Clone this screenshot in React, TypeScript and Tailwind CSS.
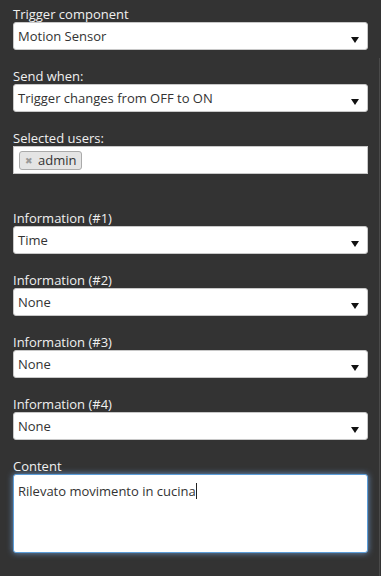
import React from "react";

const Arrow = () => (
  <svg width="8" height="6" viewBox="0 0 8 6" className="absolute right-[8px] top-[14px]">
    <path d="M0 0 L8 0 L4 6 Z" fill="#111" />
  </svg>
);

const Select = ({ label, value }: { label: string; value: string }) => (
  <div className="mb-[18px]">
    <div className="h-[16px] leading-[16px] text-[13px] text-[#f0f0f0]">{label}</div>
    <div className="relative h-[28px] rounded-[3px] border border-[#c8c8c8] bg-white pl-[4px] pt-[5px] text-[13px] leading-[16px] text-[#333]">
      {value}
      <Arrow />
    </div>
  </div>
);

export default function App() {
  return (
    <div
      className="relative h-[576px] w-[381px] overflow-hidden bg-[#333333] px-[13px] pt-[6px]"
      style={{ fontFamily: '"Open Sans", "Noto Sans", sans-serif' }}
    >
      <div className="absolute right-[1px] top-[58px] bottom-0 w-px bg-[#4a4a4a]" />
      <Select label="Trigger component" value="Motion Sensor" />
      <Select label="Send when:" value="Trigger changes from OFF to ON" />
      <div className="mb-[36px]">
        <div className="h-[16px] leading-[16px] text-[13px] text-[#f0f0f0]">Selected users:</div>
        <div className="flex h-[28px] items-center border border-[#c8c8c8] bg-white pl-[5px]">
          <div className="flex h-[19px] items-center gap-[5px] rounded-[3px] border border-[#aaa] bg-[#e4e4e4] px-[5px] text-[13px] leading-[16px] text-[#333]">
            <span className="text-[9px] leading-[9px] text-[#999]">✖</span>
            <span>admin</span>
          </div>
        </div>
      </div>
      <Select label="Information (#1)" value="Time" />
      <Select label="Information (#2)" value="None" />
      <Select label="Information (#3)" value="None" />
      <Select label="Information (#4)" value="None" />
      <div>
        <div className="h-[16px] leading-[16px] text-[13px] text-[#f0f0f0]">Content</div>
        <div className="h-[79px] rounded-[3px] border border-[#5b9dd9] bg-white pl-[4px] pt-[5px] text-[13px] leading-[16px] text-[#333] shadow-[0_0_6px_rgba(120,170,230,0.8)]">
          Rilevato movimento in cucina
          <span className="inline-block h-[16px] w-px translate-y-[3px] bg-[#222]" />
        </div>
      </div>
    </div>
  );
}
